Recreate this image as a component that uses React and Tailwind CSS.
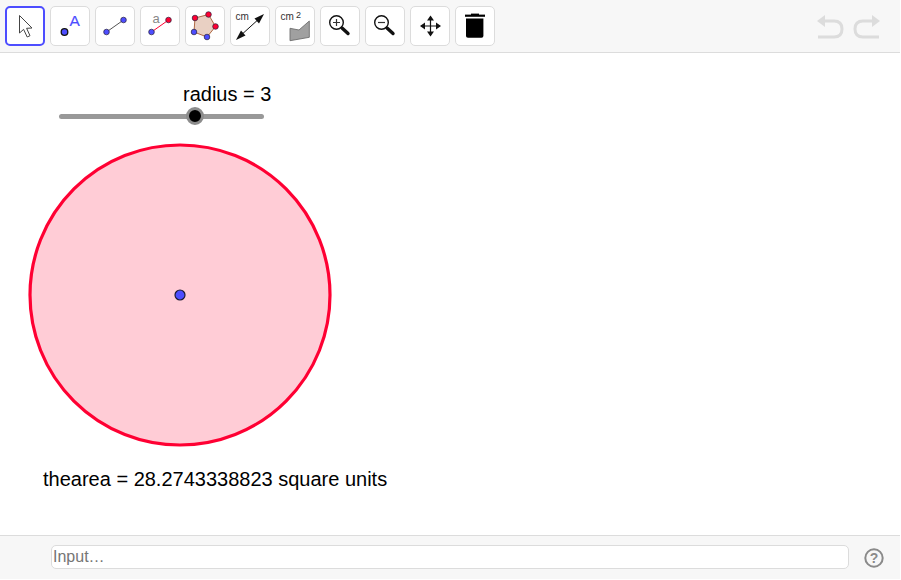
const BLUE = "#4d4dff";
const RED = "#ff0033";

function Dot({ cx, cy, fill = BLUE, r = 2.8 }) {
  return <circle cx={cx} cy={cy} r={r} fill={fill} stroke="#26203a" strokeWidth="0.7" />;
}

function Icon({ children }) {
  return (
    <svg width="40" height="40" viewBox="0 0 40 40" className="block" style={{ fontFamily: '"Liberation Sans", Arial, sans-serif' }}>
      {children}
    </svg>
  );
}

function ToolButton({ active, children }) {
  return (
    <button
      className={
        active
          ? "w-10 h-10 p-0 box-border relative rounded-[5px] bg-white border-2 border-[#4d4dff] overflow-visible"
          : "w-10 h-10 p-0 box-border relative rounded-[5px] bg-white border border-[#dcdcdc] overflow-visible"
      }
    >
      <span className={active ? "absolute -left-[2px] -top-[2px]" : "absolute -left-px -top-px"}>{children}</span>
    </button>
  );
}

function Tools() {
  return (
    <div className="flex gap-[5px]">
      <ToolButton active>
        <Icon>
          <path d="M14.5 9.5 L14.5 27 L18.6 23.4 L22.2 31 L25 29.7 L21.6 22.3 L27 22 Z" fill="#fff" stroke="#444" strokeWidth="1" strokeLinejoin="round" />
        </Icon>
      </ToolButton>
      <ToolButton>
        <Icon>
          <circle cx="14.5" cy="26" r="3.3" fill={BLUE} stroke="#111" strokeWidth="1.3" />
          <text x="19.5" y="20" fontSize="15.5" fill={BLUE} stroke={BLUE} strokeWidth="0.15">A</text>
        </Icon>
      </ToolButton>
      <ToolButton>
        <Icon>
          <line x1="11.5" y1="26" x2="28.5" y2="14" stroke="#555" strokeWidth="1" />
          <Dot cx="11.5" cy="26" />
          <Dot cx="28.5" cy="14" />
        </Icon>
      </ToolButton>
      <ToolButton>
        <Icon>
          <text x="12.5" y="17.3" fontSize="13" fill="#888">a</text>
          <line x1="11.5" y1="26" x2="28.5" y2="14" stroke={RED} strokeWidth="1" />
          <Dot cx="11.5" cy="26" />
          <Dot cx="28.5" cy="14" fill={RED} />
        </Icon>
      </ToolButton>
      <ToolButton>
        <Icon>
          <polygon points="10,12 23.5,8.5 30.5,20.5 22,31 9,26" fill="#e9d0c3" stroke="#b06a45" strokeWidth="1" />
          <Dot cx="10" cy="12" fill={RED} />
          <Dot cx="23.5" cy="8.5" fill={RED} />
          <Dot cx="30.5" cy="20.5" fill={RED} />
          <Dot cx="22" cy="31" />
          <Dot cx="9" cy="26" />
        </Icon>
      </ToolButton>
      <ToolButton>
        <Icon>
          <text x="5.5" y="14" fontSize="10" fill="#333">cm</text>
          <line x1="9" y1="31" x2="31" y2="11" stroke="#111" strokeWidth="1" />
          <polygon points="34,8 24.5,12.5 29,17.5" fill="#111" />
          <polygon points="6,34 15.5,29.5 11,24.5" fill="#111" />
        </Icon>
      </ToolButton>
      <ToolButton>
        <Icon>
          <text x="5.5" y="14" fontSize="10" fill="#333">cm</text>
          <text x="21" y="11.5" fontSize="9" fill="#333">2</text>
          <polygon points="15,22.3 24,24 34.3,15 34.3,31.3 15,34.7" fill="#a0a0a0" stroke="#6e6e6e" strokeWidth="0.9" />
        </Icon>
      </ToolButton>
      <ToolButton>
        <Icon>
          <circle cx="16.5" cy="16.5" r="6.8" fill="none" stroke="#111" strokeWidth="1.4" />
          <path d="M13 16.5 H20 M16.5 13 V20" stroke="#333" strokeWidth="1.2" />
          <line x1="22" y1="22" x2="28" y2="27.5" stroke="#111" strokeWidth="3.4" strokeLinecap="round" />
        </Icon>
      </ToolButton>
      <ToolButton>
        <Icon>
          <circle cx="16.5" cy="16.5" r="6.8" fill="none" stroke="#111" strokeWidth="1.4" />
          <path d="M13 16.5 H20" stroke="#333" strokeWidth="1.2" />
          <line x1="22" y1="22" x2="28" y2="27.5" stroke="#111" strokeWidth="3.4" strokeLinecap="round" />
        </Icon>
      </ToolButton>
      <ToolButton>
        <Icon>
          <path d="M20.5 11 V29 M11.5 20 H29.5" stroke="#111" strokeWidth="1.2" />
          <polygon points="20.5,9.5 17,14.5 24,14.5" fill="#111" />
          <polygon points="20.5,30.5 17,25.5 24,25.5" fill="#111" />
          <polygon points="10,20 15,16.5 15,23.5" fill="#111" />
          <polygon points="31,20 26,16.5 26,23.5" fill="#111" />
        </Icon>
      </ToolButton>
      <ToolButton>
        <Icon>
          <path d="M10 8.6 H30 V10.8 H10 Z" fill="#000" />
          <path d="M16 7.6 H24 V9 H16 Z" fill="#000" />
          <path d="M11 12.4 H28.4 V30 Q28.4 31.8 26.5 31.8 H13 Q11 31.8 11 30 Z" fill="#000" />
        </Icon>
      </ToolButton>
    </div>
  );
}

function History() {
  return (
    <svg width="65" height="30" viewBox="0 0 65 30" className="block">
      <g fill="none" stroke="#dcdcdc" strokeWidth="3">
        <path d="M6 10 H18 Q26 10 26 18 Q26 26 18 26 H2" />
        <path d="M59 10 H47 Q39 10 39 18 Q39 26 47 26 H63" />
      </g>
      <polygon points="1,10 9,4 9,16" fill="#dcdcdc" />
      <polygon points="64,10 56,4 56,16" fill="#dcdcdc" />
    </svg>
  );
}

export default function App() {
  const sans = { fontFamily: '"Liberation Sans", Arial, sans-serif' };
  return (
    <div className="w-[900px] h-[579px] flex flex-col bg-white overflow-hidden text-black" style={sans}>
      <header className="h-[53px] shrink-0 bg-[#f7f7f7] border-b border-[#dcdcdc] flex items-start justify-between pt-[6px] pl-[5px] pr-[19px]">
        <Tools />
        <div className="pt-[5px]">
          <History />
        </div>
      </header>

      <main className="flex-1 relative">
        <div className="absolute left-[183px] top-[29px] text-[20px] leading-[24px] whitespace-nowrap">radius = 3</div>
        <div className="absolute left-[59px] top-[61px] w-[205px] h-[5px] rounded-full bg-[#999999]" />
        <div className="absolute left-[186px] top-[54px] w-[18px] h-[18px] rounded-full bg-black border-[3px] border-[#8c8c8c]" />
        <svg width="320" height="320" viewBox="0 0 320 320" className="absolute left-[20px] top-[82px]">
          <circle cx="160" cy="160" r="150" fill="#ffccd6" stroke="#ff0033" strokeWidth="3.2" />
          <circle cx="160" cy="160" r="5" fill={BLUE} stroke="#1a1a33" strokeWidth="1.2" />
        </svg>
        <div className="absolute left-[43px] top-[414px] text-[20px] leading-[24px] whitespace-nowrap">thearea = 28.2743338823 square units</div>
      </main>

      <footer className="h-[44px] shrink-0 bg-[#f7f7f7] border-t border-[#dcdcdc] flex items-center pl-[51px] pr-[16px] gap-[15px]">
        <input
          placeholder="Input…"
          className="flex-1 h-6 -mt-[1px] px-[1px] bg-white border border-[#dcdcdc] rounded-[5px] text-[16px] outline-none placeholder:text-[#757575]"
          style={sans}
        />
        <svg width="20" height="20" viewBox="0 0 20 20" className="block mt-[1px]">
          <circle cx="10" cy="10" r="8.7" fill="none" stroke="#8a8a8a" strokeWidth="2" />
          <text x="10" y="15" textAnchor="middle" fontSize="14" fontWeight="bold" fill="#8a8a8a">?</text>
        </svg>
      </footer>
    </div>
  );
}
